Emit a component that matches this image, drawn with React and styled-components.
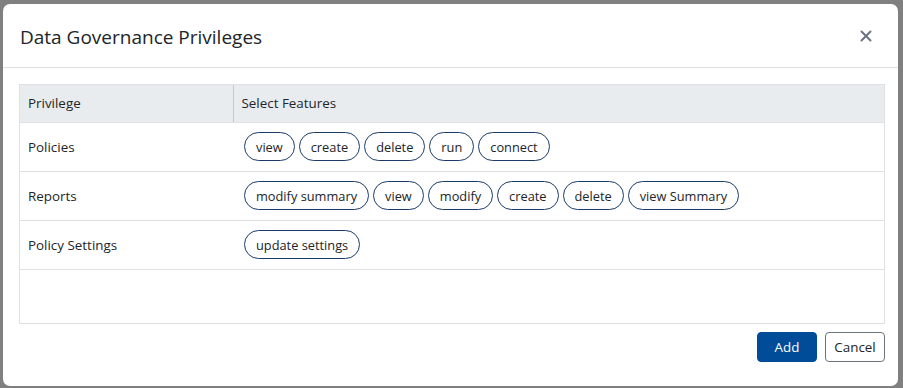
import React from "react";
import styled, { createGlobalStyle } from "styled-components";

const GlobalStyle = createGlobalStyle`
  html, body {
    margin: 0;
    padding: 0;
    background: #808080;
    font-family: "Open Sans", "Noto Sans", sans-serif;
  }
  * {
    box-sizing: border-box;
  }
`;

const privileges = [
  { name: "Policies", features: ["view", "create", "delete", "run", "connect"] },
  {
    name: "Reports",
    features: ["modify summary", "view", "modify", "create", "delete", "view Summary"],
  },
  { name: "Policy Settings", features: ["update settings"] },
];

const App = () => {
  return (
    <>
      <GlobalStyle />
      <Backdrop>
        <Modal>
          <Header>
            <Title>Data Governance Privileges</Title>
            <CloseButton aria-label="close">
              <svg width="12" height="12" viewBox="0 0 12 12">
                <path
                  d="M1.5 1.5 L10.5 10.5 M10.5 1.5 L1.5 10.5"
                  stroke="#6b7280"
                  strokeWidth="2"
                  strokeLinecap="round"
                />
              </svg>
            </CloseButton>
          </Header>
          <Body>
            <TableWrap>
              <Table>
                <thead>
                  <tr>
                    <Th $first>Privilege</Th>
                    <Th>Select Features</Th>
                  </tr>
                </thead>
                <tbody>
                  {privileges.map((p) => (
                    <tr key={p.name}>
                      <Td>{p.name}</Td>
                      <Td>
                        <Chips>
                          {p.features.map((f) => (
                            <Chip key={f}>{f}</Chip>
                          ))}
                        </Chips>
                      </Td>
                    </tr>
                  ))}
                </tbody>
              </Table>
            </TableWrap>
          </Body>
          <Footer>
            <Button $primary>Add</Button>
            <Button>Cancel</Button>
          </Footer>
        </Modal>
      </Backdrop>
    </>
  );
};

export default App;

const Backdrop = styled.div`
  width: 903px;
  height: 388px;
  padding: 4px 5px 2px 3px;
  overflow: hidden;
`;

const Modal = styled.div`
  width: 895px;
  height: 382px;
  background: #fff;
  border-radius: 7px;
  display: flex;
  flex-direction: column;
  color: #212529;
`;

const Header = styled.div`
  display: flex;
  align-items: center;
  justify-content: space-between;
  height: 64px;
  padding: 0 26px 0 17px;
  border-bottom: 1px solid #dee2e6;
`;

const Title = styled.h5`
  margin: 0;
  font-size: 19px;
  font-weight: 400;
  line-height: 30px;
  padding-top: 2px;
`;

const CloseButton = styled.button`
  border: none;
  background: transparent;
  padding: 0;
  display: flex;
  cursor: pointer;
`;

const Body = styled.div`
  padding: 16px 13px 0 16px;
`;

const TableWrap = styled.div`
  height: 240px;
  border: 1px solid #dee2e6;
`;

const Table = styled.table`
  width: 100%;
  border-collapse: collapse;
  font-size: 13.4px;
`;

const Th = styled.th`
  background: #e9ecef;
  height: 37px;
  text-align: left;
  font-weight: 400;
  padding: 0 8px;
  width: ${(p) => (p.$first ? "213px" : "auto")};
  border-right: ${(p) => (p.$first ? "1px solid #c5c9cd" : "none")};
  border-bottom: 1px solid #dee2e6;
`;

const Td = styled.td`
  height: 49px;
  padding: 0 8px;
  border-bottom: 1px solid #dee2e6;
  vertical-align: middle;
`;

const Chips = styled.div`
  display: flex;
  gap: 4px;
  padding-left: 3px;
`;

const Chip = styled.span`
  display: inline-flex;
  align-items: center;
  height: 29px;
  padding: 0 11px;
  border: 1.5px solid #1b3c69;
  border-radius: 15px;
  font-size: 12.8px;
  color: #212529;
`;

const Footer = styled.div`
  display: flex;
  justify-content: flex-end;
  gap: 8px;
  padding: 8px 13px 0 0;
`;

const Button = styled.button`
  height: 30px;
  width: 60px;
  padding: 0;
  font-family: inherit;
  font-size: 13.4px;
  border-radius: 4px;
  cursor: pointer;
  background: ${(p) => (p.$primary ? "#004c99" : "#fff")};
  color: ${(p) => (p.$primary ? "#fff" : "#212529")};
  border: 1px solid ${(p) => (p.$primary ? "#004c99" : "#6c757d")};
`;
